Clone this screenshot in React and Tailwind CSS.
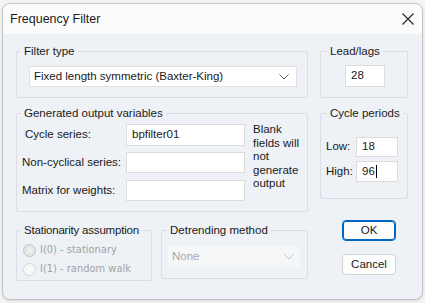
import React from 'react';

const font = { fontFamily: '"Liberation Sans", Arial, sans-serif' };

function Chevron({ color = '#555' }) {
  return (
    <svg width="10" height="6" viewBox="0 0 10 6" fill="none">
      <path d="M0.5 0.5 L5 5 L9.5 0.5" stroke={color} strokeWidth="1" />
    </svg>
  );
}

function Field({ value, className = '', cursor }) {
  return (
    <div className={`bg-white border border-[#dcdcdc] flex items-center pl-[5px] text-[11.5px] text-[#1a1a1a] ${className}`}>
      {value}
      {cursor && <span className="inline-block w-px h-[13px] bg-black ml-[1px]" />}
    </div>
  );
}

// fieldset keeps no padding so the legend sits at a fixed spot; padding goes on the inner div
function Group({ title, className = '', legendClass = 'ml-[4px]', innerClass = '', children }) {
  return (
    <fieldset className={`border border-[#d9dee6] rounded-[2px] p-0 ${className}`}>
      <legend className={`px-[3px] leading-[15px] whitespace-nowrap text-[11.5px] text-[#1a1a1a] ${legendClass}`}>{title}</legend>
      <div className={innerClass}>{children}</div>
    </fieldset>
  );
}

function Radio({ checked, label }) {
  return (
    <div className="flex items-center h-[19px] pl-[6px]">
      <span
        className={`w-[13px] h-[13px] rounded-full border ${
          checked ? 'border-[#c4c4c4] bg-[#e6e6e6] flex items-center justify-center' : 'border-[#d6d6d6] bg-[#f7f7f7]'
        }`}
      >
        {checked && <span className="w-[5px] h-[5px] rounded-full bg-[#f0f0f0]" />}
      </span>
      <span className="ml-[4px] text-[#a3a3a3]" style={{ fontFamily: '"DejaVu Sans Condensed", "DejaVu Sans", sans-serif', fontSize: '11px' }}>
        {label}
      </span>
    </div>
  );
}

export default function App() {
  return (
    <div className="w-[425px] h-[303px] bg-[#f4f4f4] overflow-hidden" style={font}>
      <div className="ml-[2px] mt-[3px] w-[421px] h-[297px] rounded-[8px] border border-[#c4c4c4] bg-[#eef1f6] overflow-hidden flex flex-col shadow-sm">
        {/* title bar */}
        <div className="h-[30px] bg-[#fbfbfb] flex items-center justify-between pl-[7px] pr-[8px] shrink-0">
          <span className="text-[12.5px] text-[#1b1b1b]">Frequency Filter</span>
          <svg width="12" height="12" viewBox="0 0 12 12">
            <path d="M0.5 0.5 L11.5 11.5 M11.5 0.5 L0.5 11.5" stroke="#222" strokeWidth="1.1" />
          </svg>
        </div>

        <div className="pl-[13px] pt-[10px]">
          {/* row 1 */}
          <div className="flex items-start">
            <Group title="Filter type" className="w-[292px]" innerClass="pl-[12px] pb-[10px]">
              <div className="mt-[7px] w-[268px] h-[21px] bg-white border border-[#e1e1e1] flex items-center justify-between pl-[4px] pr-[7px] text-[11.5px] text-[#1a1a1a]">
                <span>Fixed length symmetric (Baxter-King)</span>
                <Chevron color="#666" />
              </div>
            </Group>
            <Group title="Lead/lags" className="ml-[12px] w-[88px]" legendClass="ml-[6px]" innerClass="pl-[24px] pb-[10px]">
              <Field value="28" className="mt-[6px] w-[40px] h-[22px]" />
            </Group>
          </div>

          {/* row 2 */}
          <div className="flex items-start mt-[8px]">
            <Group title="Generated output variables" className="w-[292px]" innerClass="pl-[5px] pb-[10px]">
              <div className="flex mt-[3px]">
                <div className="flex flex-col gap-[7px] text-[11.5px] text-[#1a1a1a]">
                  <div className="flex items-center h-[21px]">
                    <span className="w-[104px] pl-[3px]">Cycle series:</span>
                    <Field value="bpfilter01" className="w-[119px] h-[22px]" />
                  </div>
                  <div className="flex items-center h-[21px]">
                    <span className="w-[104px]">Non-cyclical series:</span>
                    <Field value="" className="w-[119px] h-[21px]" />
                  </div>
                  <div className="flex items-center h-[21px]">
                    <span className="w-[104px]">Matrix for weights:</span>
                    <Field value="" className="w-[119px] h-[21px]" />
                  </div>
                </div>
                <div className="ml-[8px] mt-[-1px] text-[11.5px] leading-[13.5px] text-[#1a1a1a]">
                  Blank<br />fields will<br />not<br />generate<br />output
                </div>
              </div>
            </Group>
            <Group title="Cycle periods" className="ml-[12px] w-[88px]" legendClass="ml-[6px]" innerClass="pl-[5px] pb-[16px]">
              <div className="mt-[16px] flex flex-col gap-[4px] text-[11.5px] text-[#1a1a1a]">
                <div className="flex items-center">
                  <span className="w-[30px]">Low:</span>
                  <Field value="18" className="w-[42px] h-[20px]" />
                </div>
                <div className="flex items-center">
                  <span className="w-[30px]">High:</span>
                  <Field value="96" cursor className="w-[42px] h-[21px]" />
                </div>
              </div>
            </Group>
          </div>

          {/* row 3 */}
          <div className="flex items-start mt-[8px]">
            <Group title="Stationarity assumption" className="mt-[3px] w-[136px]" legendClass="ml-[4px] tracking-[-0.2px]" innerClass="pb-[1px]">
              <div className="mt-[3px]">
                <Radio checked label="I(0) - stationary" />
                <Radio label="I(1) - random walk" />
              </div>
            </Group>
            <Group title="Detrending method" className="mt-[3px] ml-[9px] w-[147px]" legendClass="ml-[5px]" innerClass="pl-[6px] pb-[11px]">
              <div className="mt-[8px] w-[132px] h-[21px] bg-[#f5f6f8] flex items-center justify-between pl-[4px] pr-[6px] text-[11.5px] text-[#a8a8a8]">
                <span>None</span>
                <Chevron color="#c4c4c4" />
              </div>
            </Group>
            <div className="ml-[34px] flex flex-col gap-[13px]">
              <button className="w-[54px] h-[21px] bg-[#fdfdfd] border border-[#0067c0] rounded-[4px] text-[11.5px] text-[#1a1a1a] shadow-[inset_0_0_0_1px_#0067c0]">
                OK
              </button>
              <button className="w-[54px] h-[21px] bg-[#fdfdfd] border border-[#d3d3d3] rounded-[4px] text-[11.5px] text-[#1a1a1a]">
                Cancel
              </button>
            </div>
          </div>
        </div>
      </div>
    </div>
  );
}
